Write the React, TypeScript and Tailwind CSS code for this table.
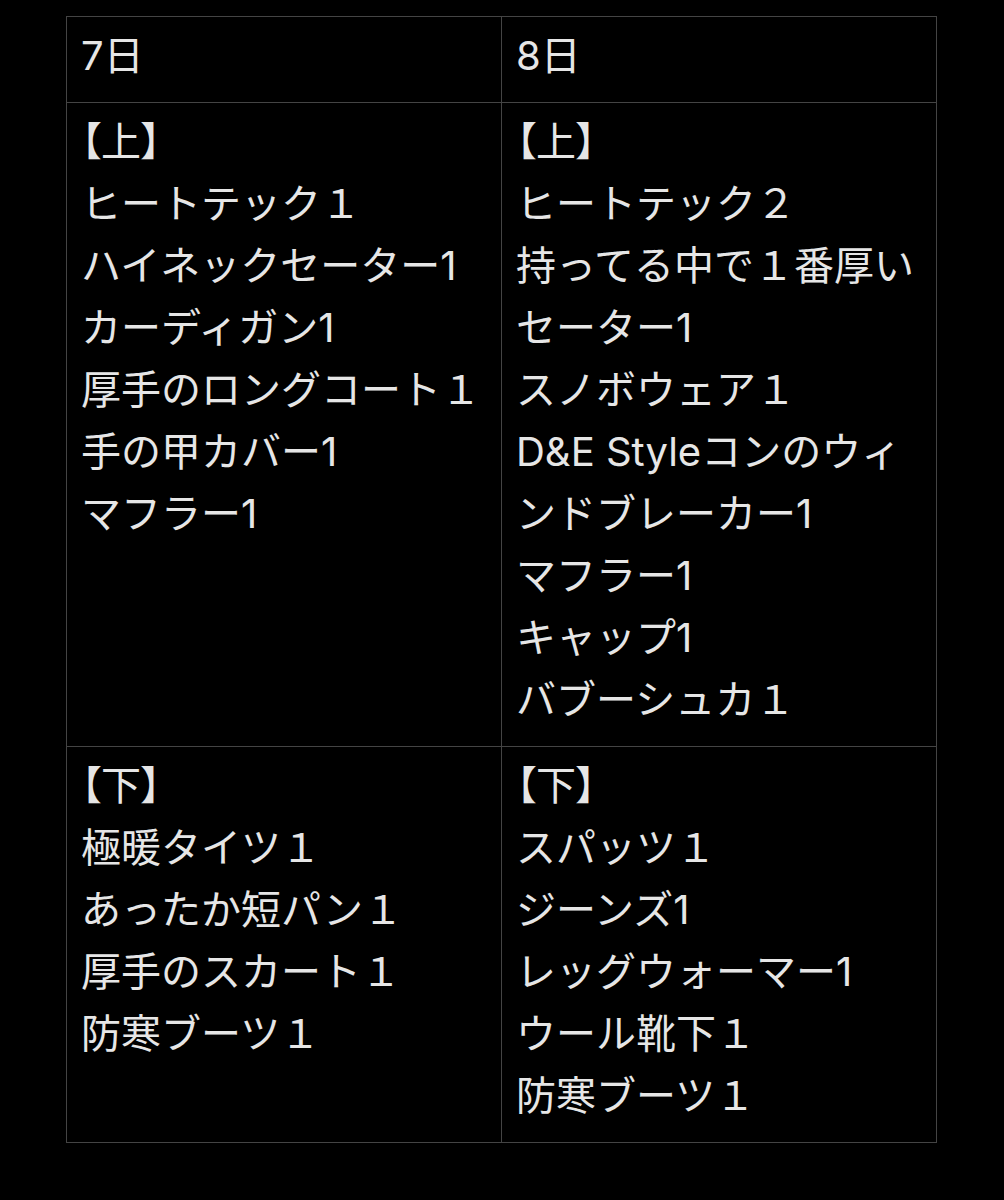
const days = [
  {
    day: "7日",
    top: [
      "【上】",
      "ヒートテック１",
      "ハイネックセーター1",
      "カーディガン1",
      "厚手のロングコート１",
      "手の甲カバー1",
      "マフラー1",
    ],
    bottom: [
      "【下】",
      "極暖タイツ１",
      "あったか短パン１",
      "厚手のスカート１",
      "防寒ブーツ１",
    ],
  },
  {
    day: "8日",
    top: [
      "【上】",
      "ヒートテック２",
      "持ってる中で１番厚い",
      "セーター1",
      "スノボウェア１",
      "D&E Styleコンのウィンドブレーカー1",
      "マフラー1",
      "キャップ1",
      "バブーシュカ１",
    ],
    bottom: [
      "【下】",
      "スパッツ１",
      "ジーンズ1",
      "レッグウォーマー1",
      "ウール靴下１",
      "防寒ブーツ１",
    ],
  },
];

// one cell of the table
const Cell = ({ lines }: { lines: string[] }) => (
  <td className="w-1/2 border border-[#444444] px-[14px] pt-2 pb-[15px] align-top">
    {lines.map((line) =>
      line.startsWith("【") ? (
        // brackets sit tight like iOS proportional kana
        <div key={line} className="[font-feature-settings:'palt']">
          {line}
        </div>
      ) : (
        <div key={line}>{line}</div>
      ),
    )}
  </td>
);

export default function App() {
  return (
    <div
      className="min-h-[1200px] bg-black pt-4 text-[40px] leading-[62px] text-[#e6e6e6]"
      style={{ fontFamily: '"Inter", "Noto Sans CJK JP", sans-serif' }}
    >
      <table className="ml-[66px] w-[871px] table-fixed border-collapse">
        <tbody>
          <tr>
            {days.map((d) => (
              <Cell key={d.day} lines={[d.day]} />
            ))}
          </tr>
          <tr>
            {days.map((d) => (
              <Cell key={d.day} lines={d.top} />
            ))}
          </tr>
          <tr>
            {days.map((d) => (
              <Cell key={d.day} lines={d.bottom} />
            ))}
          </tr>
        </tbody>
      </table>
    </div>
  );
}
